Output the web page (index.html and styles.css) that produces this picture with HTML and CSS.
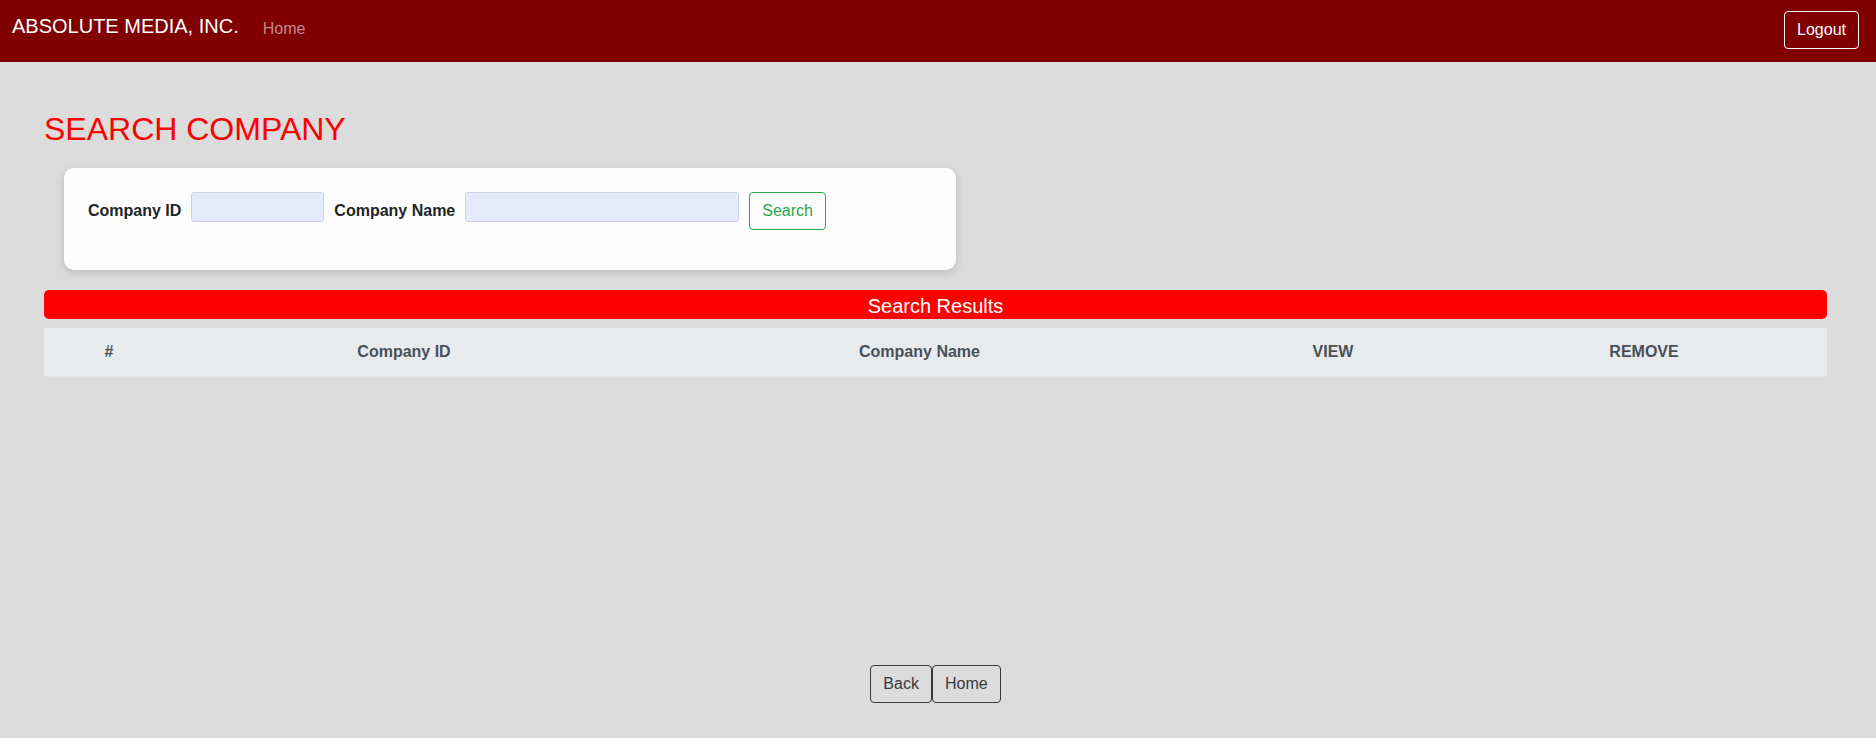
FILE: index.html
```html
<!DOCTYPE html>
<html lang="en">
<head>
<meta charset="utf-8">
<title>Search Company</title>
<link rel="stylesheet" href="styles.css">
</head>
<body>
<nav class="navbar">
  <a class="brand" href="#">ABSOLUTE MEDIA, INC.</a>
  <a class="nav-link" href="#">Home</a>
  <button class="logout" type="button">Logout</button>
</nav>
<main class="page">
  <h2 class="title">SEARCH COMPANY</h2>
  <div class="card">
    <form class="search-form">
      <label class="lbl">Company ID</label>
      <input class="field field-id" type="text">
      <label class="lbl">Company Name</label>
      <input class="field field-name" type="text">
      <button class="btn-search" type="button">Search</button>
    </form>
  </div>
  <div class="results-bar">Search Results</div>
  <table class="results">
    <thead>
      <tr>
        <th class="c1">#</th>
        <th class="c2">Company ID</th>
        <th class="c3">Company Name</th>
        <th class="c4">VIEW</th>
        <th class="c5">REMOVE</th>
      </tr>
    </thead>
  </table>
  <div class="footer-btns"><button class="btn-dark" type="button">Back</button><button class="btn-dark" type="button">Home</button></div>
</main>
</body>
</html>
```

FILE: styles.css
```css
html, body {
  margin: 0;
  padding: 0;
}
body {
  background: #dcdcdc;
  font-family: "Liberation Sans", Arial, sans-serif;
  font-size: 16px;
  color: #212529;
  height: 738px;
  overflow: hidden;
}
.navbar {
  height: 62px;
  background: #800000;
  display: flex;
  align-items: flex-start;
  padding: 0 17px 0 12px;
  box-sizing: border-box;
}
.brand {
  color: #fff;
  text-decoration: none;
  font-size: 20px;
  line-height: 30px;
  margin-top: 11px;
  margin-right: 24px;
  white-space: nowrap;
}
.nav-link {
  color: rgba(255, 255, 255, 0.55);
  text-decoration: none;
  font-size: 16px;
  line-height: 24px;
  margin-top: 17px;
}
.logout {
  margin-left: auto;
  margin-top: 11px;
  height: 38px;
  padding: 0 12px;
  background: transparent;
  color: #fff;
  border: 1px solid #fff;
  border-radius: 4px;
  font-family: inherit;
  font-size: 16px;
  line-height: 24px;
}
.page {
  padding: 0 49px 0 44px;
}
.title {
  margin: 48px 0 0;
  color: #ff0000;
  font-weight: 400;
  font-size: 32px;
  line-height: 38px;
}
.card {
  margin: 20px 0 0 20px;
  width: 892px;
  height: 102px;
  box-sizing: border-box;
  background: #fdfdfd;
  border-radius: 10px;
  box-shadow: 0 3px 8px rgba(0, 0, 0, 0.15);
  padding: 24px;
}
.search-form {
  display: flex;
  align-items: center;
  gap: 10px;
}
.lbl {
  font-weight: 700;
  font-size: 16px;
  color: #212529;
}
.field {
  align-self: flex-start;
  height: 26px;
  box-sizing: content-box;
  padding: 1px 2px;
  margin: 0;
  background: #e2eafc;
  border: 1px solid #cdd3de;
  border-radius: 3px;
  font-family: inherit;
  font-size: 16px;
}
.field-id { width: 127px; }
.field-name { width: 268px; }
.btn-search {
  height: 38px;
  padding: 0 12px;
  background: transparent;
  color: #28a745;
  border: 1px solid #28a745;
  border-radius: 4px;
  font-family: inherit;
  font-size: 16px;
  line-height: 24px;
}
.results-bar {
  margin-top: 20px;
  height: 29px;
  box-sizing: border-box;
  padding-top: 3px;
  line-height: 26px;
  background: #ff0000;
  color: #fff;
  font-size: 20px;
  text-align: center;
  border-radius: 5px;
}
.results {
  margin-top: 9px;
  width: 100%;
  border-collapse: collapse;
  table-layout: fixed;
}
.results th {
  background: #e8ebee;
  color: #495057;
  font-weight: 700;
  font-size: 16px;
  line-height: 24px;
  padding: 12px 0;
  text-align: center;
  border-bottom: 1px solid #dfe3e7;
}
.c1 { width: 130px; }
.c2 { width: 460px; }
.c3 { width: 571px; }
.c4 { width: 256px; }
.c5 { width: auto; }
.footer-btns {
  margin-top: 288px;
  display: flex;
  justify-content: center;
}
.btn-dark {
  height: 38px;
  padding: 0 12px;
  background: transparent;
  color: #343a40;
  border: 1px solid #343a40;
  border-radius: 4px;
  font-family: inherit;
  font-size: 16px;
  line-height: 24px;
}
```
